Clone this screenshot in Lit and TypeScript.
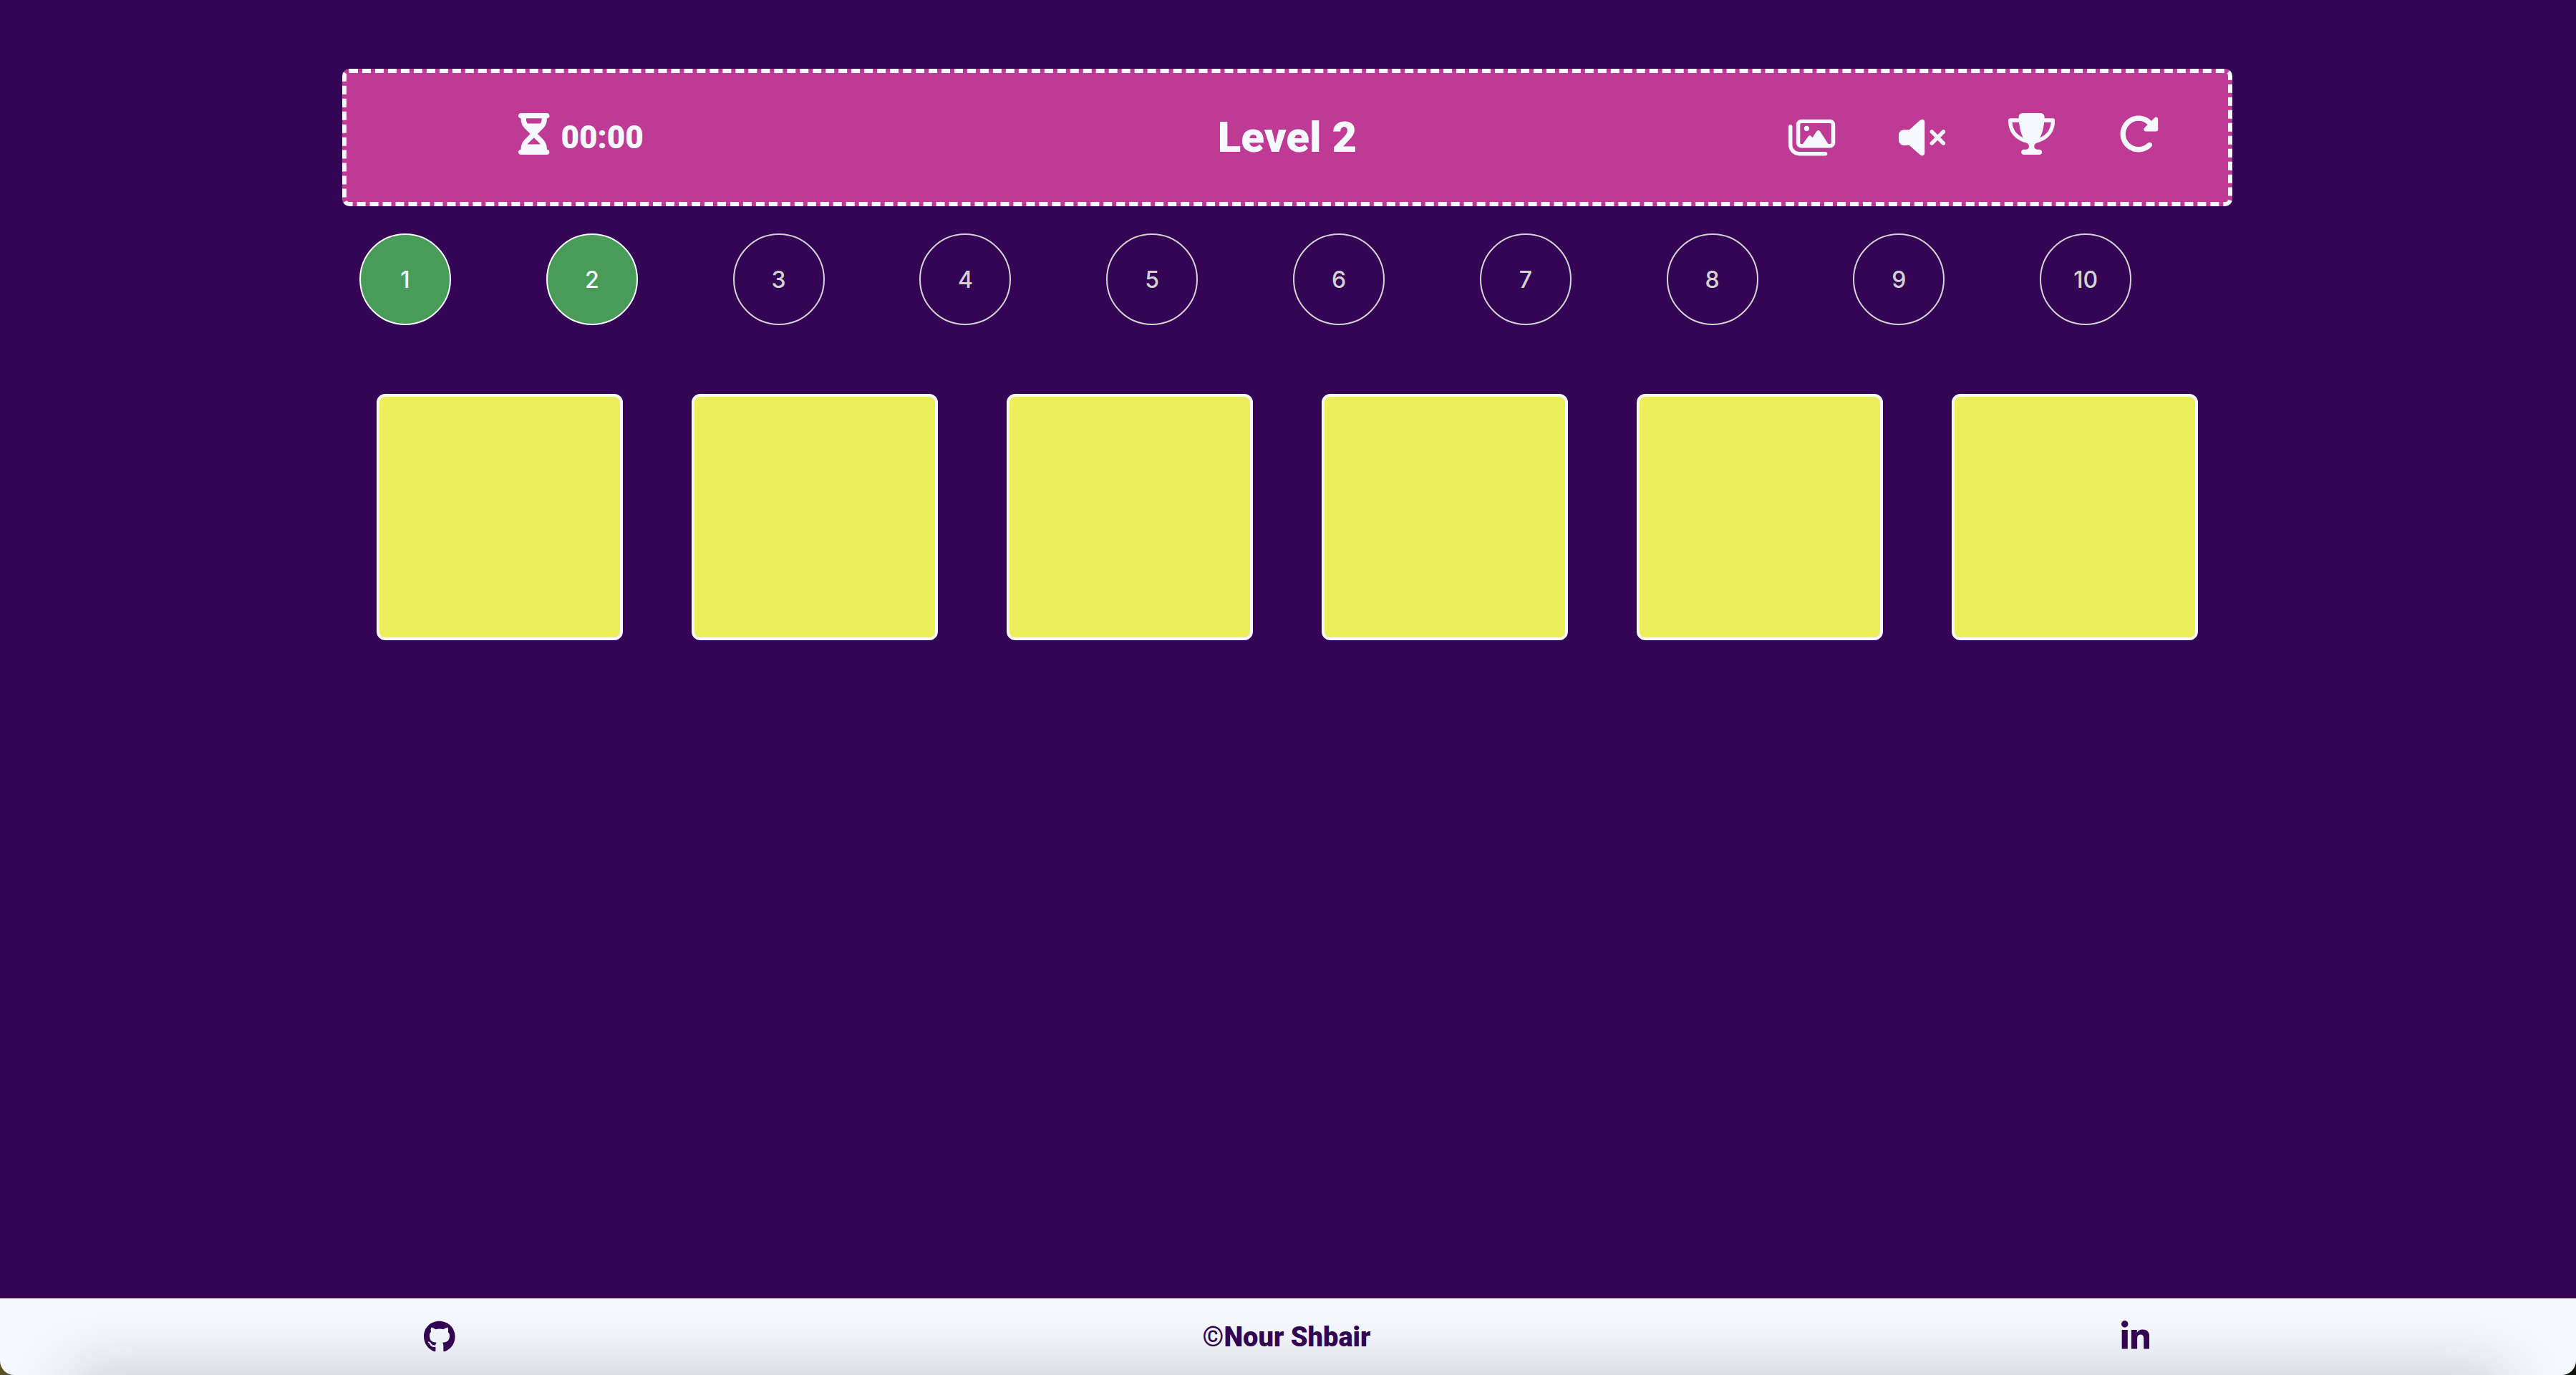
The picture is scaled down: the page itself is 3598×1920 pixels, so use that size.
import { LitElement, html, css, svg } from "lit";
import { customElement, state } from "lit/decorators.js";
import { classMap } from "lit/directives/class-map.js";

const icons = {
  hourglass: svg`<svg viewBox="0 0 384 512" aria-hidden="true"><path d="M32 0C14.3 0 0 14.3 0 32S14.3 64 32 64V75c0 42.4 16.9 83.1 46.9 113.1L146.7 256 78.9 323.9C48.9 353.9 32 394.6 32 437v11c-17.7 0-32 14.3-32 32s14.3 32 32 32H64 320h32c17.7 0 32-14.3 32-32s-14.3-32-32-32V437c0-42.4-16.9-83.1-46.9-113.1L237.3 256l67.9-67.9c30-30 46.9-70.7 46.9-113.1V64c17.7 0 32-14.3 32-32s-14.3-32-32-32H320 64 32zM96 75V64H288V75c0 19-5.6 37.4-16 53H112c-10.3-15.6-16-34-16-53zm16 309c3.5-5.3 7.6-10.3 12.1-14.9L192 301.3l67.9 67.9c4.6 4.6 8.6 9.6 12.1 14.9H112z"/></svg>`,
  images: svg`<svg viewBox="0 0 576 512" aria-hidden="true"><path d="M160 80H512c8.8 0 16 7.2 16 16V320c0 8.8-7.2 16-16 16H490.8L388.1 178.9c-4.4-6.8-12-10.9-20.1-10.9s-15.7 4.1-20.1 10.9l-52.2 79.8-12.4-16.9c-4.5-6.2-11.7-9.8-19.4-9.8s-14.8 3.6-19.4 9.8L175.6 336H160c-8.8 0-16-7.2-16-16V96c0-8.8 7.2-16 16-16zM96 96V320c0 35.3 28.7 64 64 64H512c35.3 0 64-28.7 64-64V96c0-35.3-28.7-64-64-64H160c-35.3 0-64 28.7-64 64zM48 120c0-13.3-10.7-24-24-24S0 106.7 0 120V344c0 75.1 60.9 136 136 136H456c13.3 0 24-10.7 24-24s-10.7-24-24-24H136c-48.6 0-88-39.4-88-88V120zm208 24a32 32 0 1 0 -64 0 32 32 0 1 0 64 0z"/></svg>`,
  muted: svg`<svg viewBox="0 0 576 512" aria-hidden="true"><path d="M301.1 34.8C312.6 40 320 51.4 320 64V448c0 12.6-7.4 24-18.9 29.2s-25 3.1-34.4-5.3L131.8 352H64c-35.3 0-64-28.7-64-64V224c0-35.3 28.7-64 64-64h67.8L266.7 40.1c9.4-8.4 22.9-10.4 34.4-5.3zM425 167l55 55 55-55c9.4-9.4 24.6-9.4 33.9 0s9.4 24.6 0 33.9l-55 55 55 55c9.4 9.4 9.4 24.6 0 33.9s-24.6 9.4-33.9 0l-55-55-55 55c-9.4 9.4-24.6 9.4-33.9 0s-9.4-24.6 0-33.9l55-55-55-55c-9.4-9.4-9.4-24.6 0-33.9s24.6-9.4 33.9 0z"/></svg>`,
  trophy: svg`<svg viewBox="0 0 576 512" aria-hidden="true"><path d="M400 0H176c-26.5 0-48.1 21.8-47.1 48.2c.2 5.3 .4 10.6 .7 15.8H24C10.7 64 0 74.7 0 88c0 92.6 33.5 157 78.5 200.7c44.3 43.1 98.3 64.8 138.1 75.8c23.4 6.5 39.4 26 39.4 45.6c0 20.9-17 37.9-37.9 37.9H192c-17.7 0-32 14.3-32 32s14.3 32 32 32H384c17.7 0 32-14.3 32-32s-14.3-32-32-32H357.9C337 448 320 431 320 410.1c0-19.6 15.9-39.2 39.4-45.6c39.9-11 93.9-32.7 138.2-75.8C542.5 245 576 180.6 576 88c0-13.3-10.7-24-24-24H446.4c.3-5.2 .5-10.4 .7-15.8C448.1 21.8 426.5 0 400 0zM48.9 112h84.4c9.1 90.1 29.2 150.3 51.9 190.6c-24.9-11-50.8-26.5-73.2-48.3c-32-31.1-58-76-63-142.3zM464.1 254.3c-22.4 21.8-48.3 37.3-73.2 48.3c22.7-40.3 42.8-100.5 51.9-190.6h84.4c-5.1 66.3-31.1 111.2-63 142.3z"/></svg>`,
  restart: svg`<svg viewBox="0 0 512 512" aria-hidden="true"><path d="M463.5 224H472c13.3 0 24-10.7 24-24V72c0-9.7-5.8-18.5-14.8-22.2s-19.3-1.7-26.2 5.2L413.4 96.6c-87.6-86.5-228.7-86.2-315.8 1c-87.5 87.5-87.5 229.3 0 316.8s229.3 87.5 316.8 0c12.5-12.5 12.5-32.8 0-45.3s-32.8-12.5-45.3 0c-62.5 62.5-163.8 62.5-226.3 0s-62.5-163.8 0-226.3c62.2-62.2 162.7-62.5 225.3-1L327 183c-6.9 6.9-8.9 17.2-5.2 26.2s12.5 14.8 22.2 14.8H463.5z"/></svg>`,
  github: svg`<svg viewBox="0 0 496 512" aria-hidden="true"><path d="M165.9 397.4c0 2-2.3 3.6-5.2 3.6-3.3.3-5.6-1.3-5.6-3.6 0-2 2.3-3.6 5.2-3.6 3-.3 5.6 1.3 5.6 3.6zm-31.1-4.5c-.7 2 1.3 4.3 4.3 4.9 2.6 1 5.6 0 6.2-2s-1.3-4.3-4.3-5.2c-2.6-.7-5.5.3-6.2 2.3zm44.2-1.7c-2.9.7-4.9 2.6-4.6 4.9.3 2 2.9 3.3 5.9 2.6 2.9-.7 4.9-2.6 4.6-4.6-.3-1.9-3-3.2-5.9-2.9zM244.8 8C106.1 8 0 113.3 0 252c0 110.9 69.8 205.8 169.5 239.2 12.8 2.3 17.3-5.6 17.3-12.1 0-6.2-.3-40.4-.3-61.4 0 0-70 15-84.7-29.8 0 0-11.4-29.1-27.8-36.6 0 0-22.9-15.7 1.6-15.4 0 0 24.9 2 38.6 25.8 21.9 38.6 58.6 27.5 72.9 20.9 2.3-16 8.8-27.1 16-33.7-55.9-6.2-112.3-14.3-112.3-110.5 0-27.5 7.6-41.3 23.6-58.9-2.6-6.5-11.1-33.3 2.6-67.9 20.9-6.5 69 27 69 27 20-5.6 41.5-8.5 62.8-8.5s42.8 2.9 62.8 8.5c0 0 48.1-33.6 69-27 13.7 34.7 5.2 61.4 2.6 67.9 16 17.7 25.8 31.5 25.8 58.9 0 96.5-58.9 104.2-114.8 110.5 9.2 7.9 17 22.9 17 46.4 0 33.7-.3 75.4-.3 83.6 0 6.5 4.6 14.4 17.3 12.1C428.2 457.8 496 362.9 496 252 496 113.3 383.5 8 244.8 8z"/></svg>`,
  linkedin: svg`<svg viewBox="0 0 448 512" aria-hidden="true"><path d="M100.28 448H7.4V148.9h92.88zM53.79 108.1C24.09 108.1 0 83.5 0 53.8a53.79 53.79 0 0 1 107.58 0c0 29.7-24.1 54.3-53.79 54.3zM447.9 448h-92.68V302.4c0-34.7-.7-79.2-48.29-79.2-48.29 0-55.69 37.7-55.69 76.7V448h-92.78V148.9h89.08v40.8h1.3c12.4-23.5 42.69-48.3 87.88-48.3 94 0 111.28 61.9 111.28 142.3V448z"/></svg>`,
};

@customElement("app-root")
export class AppRoot extends LitElement {
  @state() private level = 2;

  private levels = Array.from({ length: 10 }, (_, i) => i + 1);
  private cards = Array.from({ length: 6 }, (_, i) => i + 1);

  static styles = css`
    :host {
      --ink: #350555;
      --paper: #f5f8ff;
      --pink: #bf3a95;
      --green: #499c58;
      --yellow: #ecee5c;
      --display: Roboto, "Liberation Sans", sans-serif;
      display: flex;
      flex-direction: column;
      min-height: 100vh;
      background: var(--ink);
      color: var(--paper);
      font-family: Inter, "Liberation Sans", sans-serif;
    }
    * {
      box-sizing: border-box;
    }
    button {
      margin: 0;
      padding: 0;
      border: 0;
      background: none;
      color: inherit;
      font: inherit;
      cursor: pointer;
    }
    a {
      color: inherit;
    }
    svg {
      display: block;
      height: 58px;
      fill: currentColor;
    }
    .game {
      flex: 1;
      padding: 96px 480px 96px 478px;
    }
    .bar {
      display: grid;
      grid-template-columns: 1fr auto 1fr;
      align-items: center;
      height: 192px;
      padding: 0 96px;
      border: 6px dashed var(--paper);
      border-radius: 10px;
      background: var(--pink);
      font-family: var(--display);
      font-weight: 900;
    }
    .timer {
      display: flex;
      align-items: center;
      gap: 16px;
      padding-left: 144px;
      font-size: 44px;
      line-height: 58px;
    }
    .title {
      margin: 0;
      font-size: 60px;
      line-height: 72px;
      font-weight: 900;
    }
    .tools {
      display: flex;
      align-items: center;
      justify-content: flex-end;
      gap: 88px;
    }
    .raised {
      padding-bottom: 10px;
    }
    .levels {
      display: grid;
      grid-template-columns: repeat(10, 1fr);
      margin: 38px 0 0;
      padding: 0 8px 0 24px;
      list-style: none;
    }
    .level {
      display: grid;
      place-items: center;
      width: 128px;
      height: 128px;
      border: 2px solid currentColor;
      border-radius: 50%;
      color: #d3d3d3;
      font-size: 32px;
      font-weight: 500;
    }
    .reached {
      background: var(--green);
      color: var(--paper);
    }
    .board {
      display: grid;
      grid-template-columns: repeat(6, 1fr);
      margin-top: 96px;
    }
    .card {
      margin: 0 48px;
      aspect-ratio: 1;
      border: 4px solid var(--paper);
      border-radius: 12px;
      background: var(--yellow);
    }
    .footer {
      background: linear-gradient(90deg, #5a5222, #14120a);
    }
    .strip {
      position: relative;
      overflow: hidden;
      display: grid;
      grid-template-columns: 1fr auto 1fr;
      align-items: center;
      height: 107px;
      padding: 0 596px 0 592px;
      border-radius: 0 0 20px 20px;
      background: var(--paper);
      color: var(--ink);
      font-family: var(--display);
      font-size: 38px;
      font-weight: 900;
    }
    /* soft shade rising from the lower edge of the footer */
    .strip::after {
      content: "";
      position: absolute;
      top: 100%;
      left: 100px;
      right: 100px;
      height: 80px;
      box-shadow: 0 0 88px rgba(20, 30, 20, 0.24);
      pointer-events: none;
    }
    .strip svg {
      height: 45px;
    }
    .end {
      justify-self: end;
    }
  `;

  render() {
    return html`
      <main class="game">
        <header class="bar">
          <div class="timer">
            <span class="raised">${icons.hourglass}</span>
            <time>00:00</time>
          </div>
          <h1 class="title">Level ${this.level}</h1>
          <div class="tools">
            <button aria-label="Change pictures">${icons.images}</button>
            <button aria-label="Unmute">${icons.muted}</button>
            <button class="raised" aria-label="Scores">${icons.trophy}</button>
            <button class="raised" aria-label="Restart">${icons.restart}</button>
          </div>
        </header>
        <ol class="levels">
          ${this.levels.map(
            (n) => html`<li>
              <button
                class=${classMap({ level: true, reached: n <= this.level })}
                @click=${() => (this.level = n)}
              >${n}</button>
            </li>`
          )}
        </ol>
        <section class="board" aria-label="Cards">
          ${this.cards.map((n) => html`<button class="card" aria-label="Card ${n}"></button>`)}
        </section>
      </main>
      <footer class="footer">
        <div class="strip">
          <a href="#github" aria-label="GitHub">${icons.github}</a>
          <span>©Nour Shbair</span>
          <a class="end" href="#linkedin" aria-label="LinkedIn">${icons.linkedin}</a>
        </div>
      </footer>
    `;
  }
}
